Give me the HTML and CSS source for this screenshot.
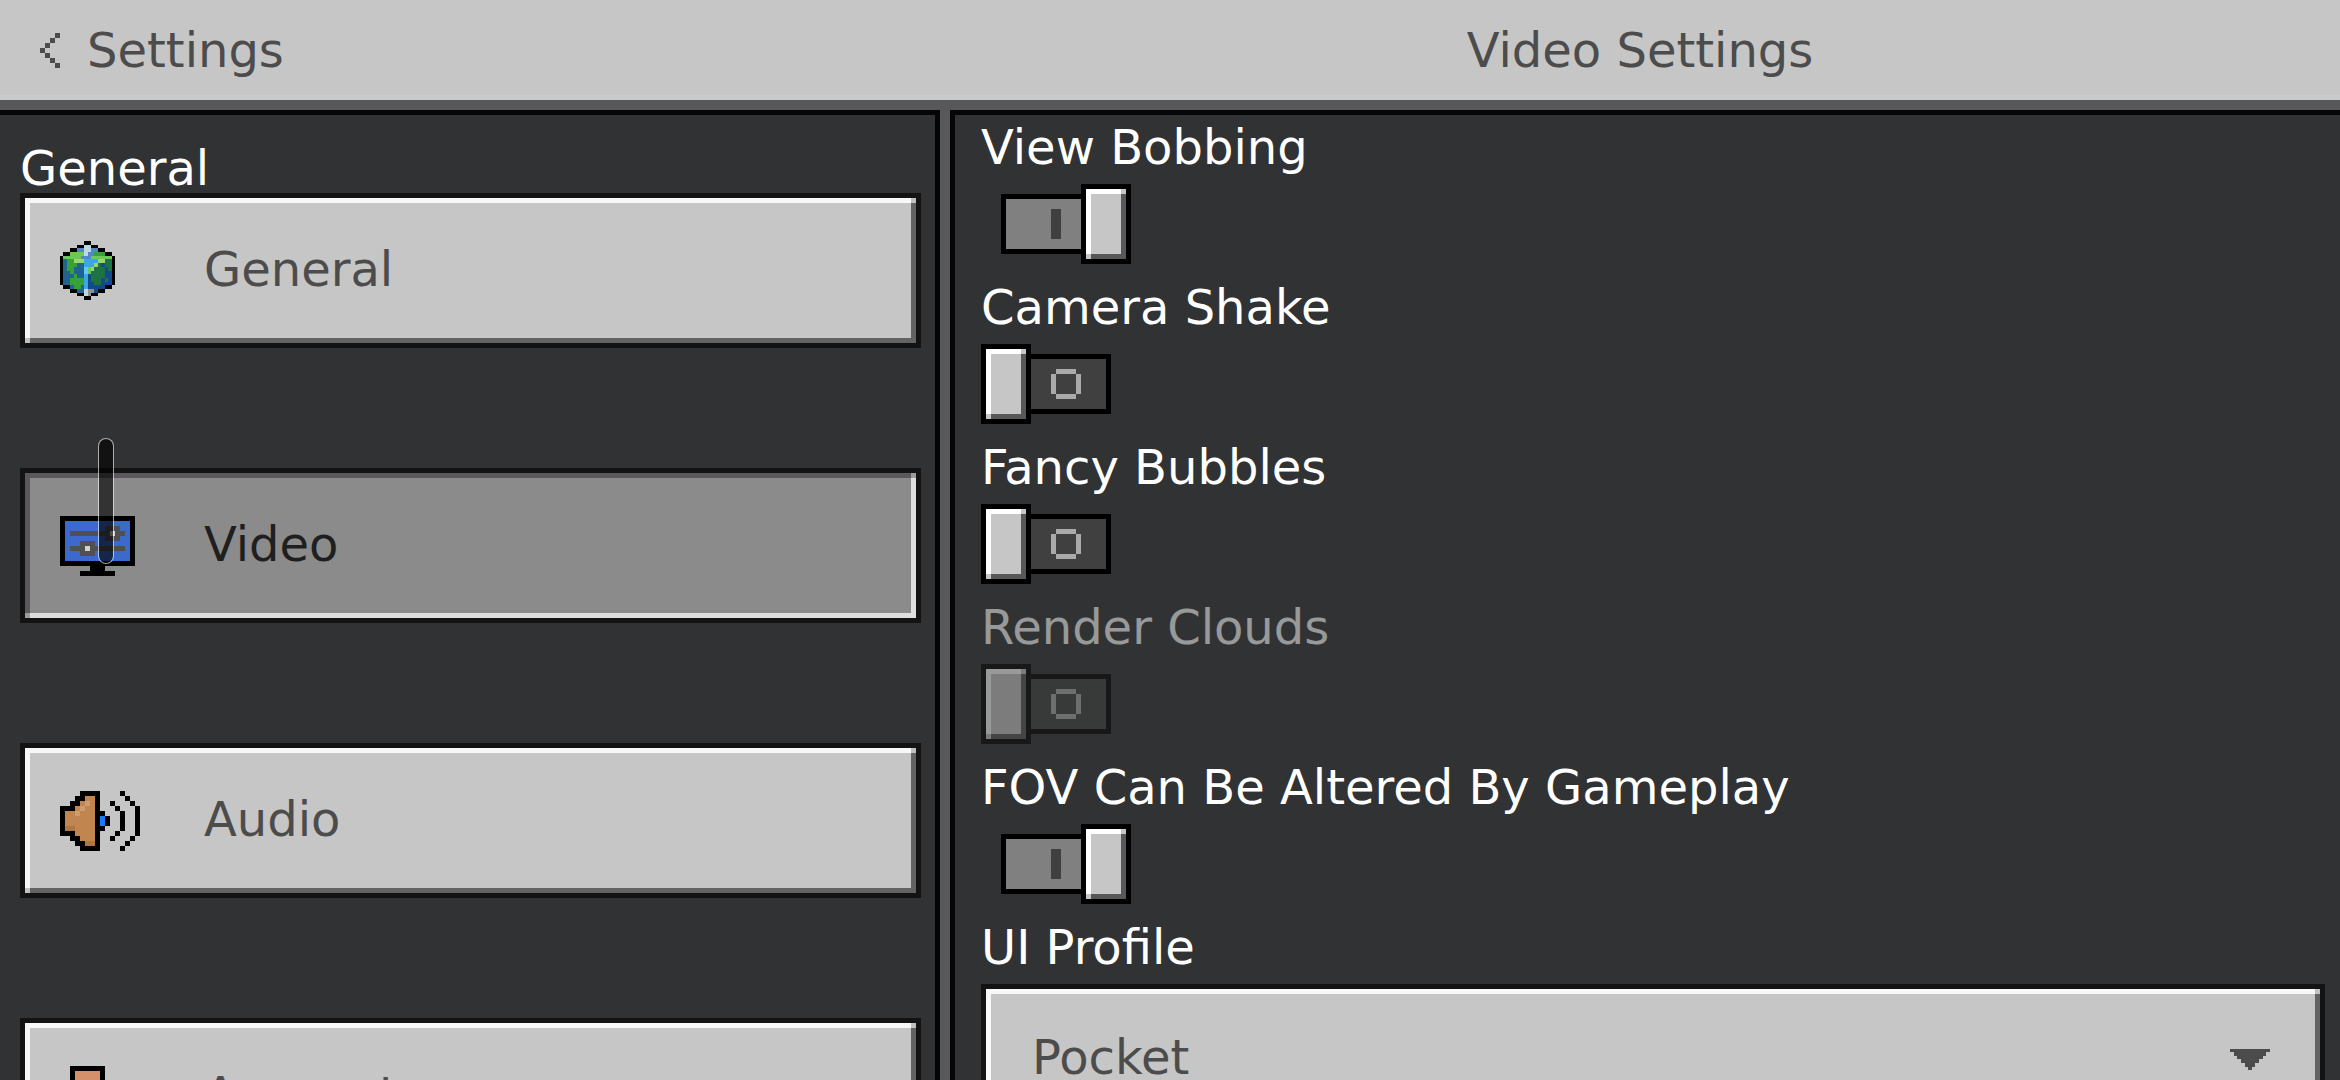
FILE: index.html
```html
<!DOCTYPE html>
<html lang="en">
<head>
<meta charset="utf-8">
<meta name="viewport" content="width=device-width, initial-scale=1">
<title>Video Settings</title>
<link rel="stylesheet" href="styles.css">
</head>
<body>
<header class="topbar">
  <button class="back" type="button">
    <svg class="chevron" viewBox="0 0 4 7" shape-rendering="crispEdges" aria-hidden="true"><path d="M3 0h1v1H3zM2 1h1v1H2zM1 2h1v1H1zM0 3h1v1H0zM1 4h1v1H1zM2 5h1v1H2zM3 6h1v1H3z"/></svg>
    Settings
  </button>
  <h1 class="title">Video Settings</h1>
</header>

<main class="panels">
  <nav class="panel sidebar">
    <h2 class="section">General</h2>
    <div class="menu">
      <button class="bevel item" type="button">
        <span class="slot">
          <svg class="globe" viewBox="0 -0.5 16 16" preserveAspectRatio="none" shape-rendering="crispEdges" aria-hidden="true">
            <path stroke="#1f638f" d="M1 5h6M1 6h6M1 7h6M1 8h6M1 9h6M1 10h6M1 11h6M3 12h4M5 13h2"/>
            <path stroke="#124a8c" d="M8 6h7M8 7h7M8 8h7M8 9h7M8 10h7M8 11h7M8 12h5M8 13h3"/>
            <path stroke="#5288c8" d="M5 2h2M9 2h2M8 3h2M6 4h3"/>
            <path stroke="#bdd8dc" d="M7 1h2M7 2h2M7 3h1M7 13h1M7 14h1"/>
            <path stroke="#8e9092" d="M8 13h2M8 14h1"/>
            <path stroke="#6cc954" d="M3 3h4M1 4h5M9 4h6M8 7h2M8 8h1"/>
            <path stroke="#9bd66c" d="M4 5h3M11 5h2M10 6h1M9 7h1"/>
            <path stroke="#36a136" d="M10 3h3M2 5h2M2 6h3M2 7h2M3 8h1M4 9h1M3 10h4M3 11h4M4 12h2"/>
            <path stroke="#1d7343" d="M13 5h2M11 6h1M13 6h2M10 7h3M14 7h1M9 8h4M9 9h4M9 10h3M13 10h1M10 11h2"/>
            <path stroke="#3aa8e6" d="M7 5h4M7 6h3M7 9h1M7 10h1M7 11h1M7 12h1"/>
            <path stroke="#5ecbfa" d="M7 7h1M7 8h1"/>
            <path stroke="#000" d="M7 0h2M5 1h2M9 1h2M3 2h2M11 2h2M1 3h2M13 3h2M0 4h1M15 4h1M0 5h1M15 5h1M0 6h1M15 6h1M0 7h1M15 7h1M0 8h1M15 8h1M0 9h1M15 9h1M0 10h1M15 10h1M0 11h1M15 11h1M1 12h2M13 12h2M3 13h2M11 13h2M5 14h2M9 14h2M7 15h2"/>
          </svg>
        </span>
        <span class="item-label">General</span>
      </button>
      <button class="bevel item selected" type="button" aria-current="page">
        <span class="slot">
          <svg class="monitor" viewBox="0 0 15 12" shape-rendering="crispEdges" aria-hidden="true">
            <path d="M0 0h15v10H9v1h2v1H4v-1h2v-1H0z"/>
            <path fill="#3c69cc" d="M1 1h13v8H1z"/>
            <path fill="#505050" d="M2 3h11v1H2zM9 2h3v3H9zM2 6h11v1H2zM4 5h3v3H4z"/>
            <path fill="#d2d2d2" d="M10 3h1v1h-1zM5 6h1v1H5z"/>
          </svg>
        </span>
        <span class="item-label">Video</span>
      </button>
      <button class="bevel item" type="button">
        <span class="slot">
          <svg class="speaker" viewBox="0 0 16 12" shape-rendering="crispEdges" aria-hidden="true">
            <path d="M4 0h4v12H4v-1H3v-1H2V9H0V3h2V2h1V1h1zM8 4h1v1h1v2H9v1H8zM10 2h1v1h-1zM11 3h1v1h-1zM12 4h1v4h-1zM11 8h1v1h-1zM10 9h1v1h-1zM12 0h1v1h-1zM13 1h1v1h-1zM14 2h1v1h-1zM15 3h1v6h-1zM14 9h1v1h-1zM13 10h1v1h-1zM12 11h1v1h-1z"/>
            <path fill="#c1854f" d="M5 1h2v10H5v-1H4V9H3V8H1V4h2V3h1V2h1z"/>
            <path fill="#cf9a6d" d="M5 2h1v1H5zM4 3h1v1H4zM3 4h1v1H3z"/>
            <path fill="#ad7644" d="M1 7h2v1H1zM5 10h2v1H5z"/>
            <path fill="#1a7bf2" d="M8 5h1v2H8z"/>
          </svg>
        </span>
        <span class="item-label">Audio</span>
      </button>
      <button class="bevel item" type="button">
        <span class="slot">
          <svg class="person" viewBox="0 0 11 12" shape-rendering="crispEdges" aria-hidden="true">
            <path d="M2 0h7v6h2v6H0V6h2z"/>
            <path fill="#d3906b" d="M3 1h5v5H3z"/>
            <path fill="#3c69cc" d="M1 7h9v4H1z"/>
          </svg>
        </span>
        <span class="item-label">Account</span>
      </button>
    </div>
  </nav>

  <section class="panel content">
    <div class="option">
      <label for="bobbing">View Bobbing</label>
      <span class="toggle"><input id="bobbing" type="checkbox" role="switch" checked><span class="track"></span><span class="knob bevel"></span></span>
    </div>
    <div class="option">
      <label for="shake">Camera Shake</label>
      <span class="toggle"><input id="shake" type="checkbox" role="switch"><span class="track"></span><span class="knob bevel"></span></span>
    </div>
    <div class="option">
      <label for="bubbles">Fancy Bubbles</label>
      <span class="toggle"><input id="bubbles" type="checkbox" role="switch"><span class="track"></span><span class="knob bevel"></span></span>
    </div>
    <div class="option disabled">
      <label for="clouds">Render Clouds</label>
      <span class="toggle"><input id="clouds" type="checkbox" role="switch" disabled><span class="track"></span><span class="knob bevel"></span></span>
    </div>
    <div class="option">
      <label for="fov">FOV Can Be Altered By Gameplay</label>
      <span class="toggle"><input id="fov" type="checkbox" role="switch" checked><span class="track"></span><span class="knob bevel"></span></span>
    </div>
    <div class="option">
      <label for="profile">UI Profile</label>
      <span class="dropdown">
        <select id="profile" class="bevel">
          <option>Pocket</option>
          <option>Classic</option>
        </select>
        <svg class="arrow" viewBox="0 0 40 21" shape-rendering="crispEdges" aria-hidden="true"><path d="M0 0h40v3h-4v4h-3v3h-4v4h-4v4h-3v3h-4v-3h-3v-4h-4v-4H7V7H4V3H0z"/></svg>
      </span>
    </div>
  </section>
</main>
<div class="touch" aria-hidden="true"></div>
</body>
</html>
```
FILE: styles.css
```css
:root {
  --face: #c6c6c6;
  --light: #f8f8f8;
  --shade: #636363;
  --corner: #c0c0c0;
  --edge: #131313;
  --ink: #4c4c4c;
  --panel: #313233;
  --divider: #58575a;
}

* {
  box-sizing: border-box;
}

body {
  margin: 0;
  height: 100vh;
  overflow: hidden;
  display: flex;
  flex-direction: column;
  background: var(--divider);
  color: #fff;
  font-family: "DejaVu Sans", sans-serif;
  font-size: 48px;
  line-height: 56px;
}

button,
select {
  margin: 0;
  border: 0;
  font: inherit;
  color: inherit;
  text-align: left;
}

h1,
h2 {
  margin: 0;
  font: inherit;
}

svg {
  display: block;
  flex: none;
}

/* Top bar */
.topbar {
  flex: none;
  height: 100px;
  display: grid;
  grid-template-columns: minmax(0, 47fr) minmax(0, 70fr);
  align-items: center;
  background: var(--face);
  border-bottom: 5px solid #c8cacc;
  color: var(--ink);
}

.back {
  display: flex;
  align-items: center;
  gap: 27px;
  padding: 5px 0 0 40px;
  background: none;
}

.chevron {
  width: 20px;
  height: 35px;
  fill: currentColor;
}

.title {
  padding-top: 5px;
  text-align: center;
}

/* Panels */
.panels {
  flex: 1;
  min-height: 0;
  margin-top: 10px;
  display: grid;
  grid-template-columns: minmax(0, 47fr) minmax(0, 70fr);
}

.panel {
  overflow: hidden;
  background: var(--panel);
  border-top: 5px solid #050505;
}

.sidebar {
  padding: 29px 14px 0 20px;
  border-right: 5px solid #050505;
}

.content {
  margin-left: 10px;
  padding: 4px 15px 0 26px;
  border-left: 5px solid #050505;
}

/* Raised surface with lit and shaded edges */
.bevel {
  border: 5px solid var(--edge);
  background:
    linear-gradient(var(--corner), var(--corner)) right top / 5px 5px no-repeat,
    linear-gradient(var(--corner), var(--corner)) left bottom / 5px 5px no-repeat,
    linear-gradient(var(--light), var(--light)) left / 5px 100% no-repeat,
    linear-gradient(var(--shade), var(--shade)) right / 5px 100% no-repeat,
    linear-gradient(var(--light), var(--light)) top / 100% 5px no-repeat,
    linear-gradient(var(--shade), var(--shade)) bottom / 100% 5px no-repeat,
    var(--face);
  background-origin: padding-box;
}

/* Sidebar */
.section {
  line-height: 48px;
  margin-bottom: 1px;
}

.menu {
  display: flex;
  flex-direction: column;
  gap: 120px;
}

.item {
  display: flex;
  align-items: center;
  height: 155px;
  padding: 0 35px;
  color: var(--ink);
}

.item.selected {
  --face: #8b8b8b;
  --light: #5a585a;
  --shade: #dedede;
  --corner: #9c9c9c;
  color: #1f1f1f;
}

.slot {
  flex: none;
  width: 144px;
}

.item-label {
  padding-bottom: 4px;
}

.globe {
  width: 55px;
  height: 59px;
}

.globe path {
  fill: none;
}

.monitor {
  width: 75px;
  height: 60px;
}

.speaker {
  width: 80px;
  height: 60px;
}

.person {
  width: 55px;
  height: 60px;
}

/* Options */
.option {
  display: flex;
  flex-direction: column;
  gap: 9px;
  margin-bottom: 15px;
}

.toggle {
  display: grid;
  grid-template-columns: 150px;
  align-items: center;
  width: 150px;
  height: 80px;
}

.toggle > * {
  grid-area: 1 / 1;
}

.toggle input {
  width: 150px;
  height: 80px;
  margin: 0;
  opacity: 0;
}

.track {
  display: flex;
  align-items: center;
  width: 90px;
  height: 60px;
  margin-left: 40px;
  padding-left: 25px;
  border: 5px solid #000;
  background: #404040;
  pointer-events: none;
}

.track::before {
  content: "";
  width: 30px;
  height: 30px;
  background:
    linear-gradient(#aaa, #aaa) top / 20px 5px no-repeat,
    linear-gradient(#aaa, #aaa) bottom / 20px 5px no-repeat,
    linear-gradient(#aaa, #aaa) left / 5px 20px no-repeat,
    linear-gradient(#aaa, #aaa) right / 5px 20px no-repeat;
}

.knob {
  --light: #fff;
  --shade: #58585a;
  --edge: #000;
  --corner: #c6c6c6;
  width: 50px;
  height: 80px;
  pointer-events: none;
}

input:checked ~ .track {
  margin-left: 20px;
  padding-left: 45px;
  background: #808080;
}

input:checked ~ .track::before {
  width: 10px;
  background: #404040;
}

input:checked ~ .knob {
  margin-left: 100px;
}

.disabled {
  opacity: 0.5;
}

.dropdown {
  display: grid;
  align-items: center;
}

.dropdown > * {
  grid-area: 1 / 1;
}

.dropdown select {
  appearance: none;
  width: 100%;
  height: 150px;
  padding: 0 100px 4px 46px;
  border-radius: 0;
  color: var(--ink);
}

.arrow {
  justify-self: end;
  width: 40px;
  height: 21px;
  margin-right: 55px;
  fill: var(--ink);
  pointer-events: none;
}

/* Touch trail drawn above the page */
.touch {
  position: absolute;
  left: 98px;
  top: 438px;
  width: 16px;
  height: 126px;
  border: 1px solid rgba(255, 255, 255, 0.6);
  border-radius: 8px;
  background: rgba(0, 0, 0, 0.63);
  background-clip: padding-box;
  pointer-events: none;
}
```
